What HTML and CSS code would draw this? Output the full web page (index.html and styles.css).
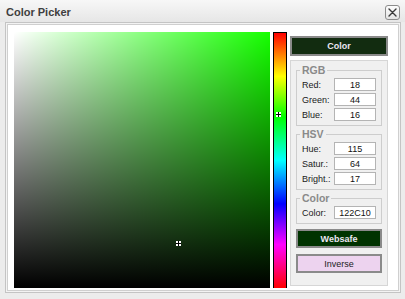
FILE: index.html
```html
<!DOCTYPE html>
<html lang="en">
<head>
  <meta charset="UTF-8" />
  <title>Color Picker</title>
  <link rel="stylesheet" href="styles.css">
</head>
<body>

  <div class="window">
    <!-- Title bar -->
    <div class="titlebar">
      <span class="title">Color Picker</span>
      <button class="close" title="Close">
        <svg width="9" height="9" viewBox="0 0 9 9">
          <path d="M1 1 L8 8 M8 1 L1 8" stroke="#3a3a3a" stroke-width="1.4" stroke-linecap="round" fill="none"/>
        </svg>
      </button>
    </div>

    <div class="frame">
      <div class="content">

        <!-- Saturation / brightness square -->
        <div class="sv">
          <span class="marker" style="left: 162px; top: 209px;">
            <svg width="5" height="5" viewBox="0 0 5 5" shape-rendering="crispEdges">
              <rect x="0" y="0" width="5" height="5" fill="#fff"/>
              <rect x="2" y="0" width="1" height="5" fill="#000"/>
              <rect x="0" y="2" width="5" height="1" fill="#000"/>
            </svg>
          </span>
        </div>

        <!-- Hue bar -->
        <div class="hue">
          <span class="marker" style="left: 2px; top: 79px;">
            <svg width="5" height="5" viewBox="0 0 5 5" shape-rendering="crispEdges">
              <rect x="0" y="0" width="5" height="5" fill="#fff"/>
              <rect x="2" y="0" width="1" height="5" fill="#000"/>
              <rect x="0" y="2" width="5" height="1" fill="#000"/>
            </svg>
          </span>
        </div>

        <!-- Values -->
        <div class="side">
          <button class="btn btn-color">Color</button>
          <div class="panel">
            <fieldset class="group">
              <legend>RGB</legend>
              <div class="row"><label>Red:</label><input class="field" value="18"></div>
              <div class="row"><label>Green:</label><input class="field" value="44"></div>
              <div class="row"><label>Blue:</label><input class="field" value="16"></div>
            </fieldset>
            <fieldset class="group">
              <legend>HSV</legend>
              <div class="row"><label>Hue:</label><input class="field" value="115"></div>
              <div class="row"><label>Satur.:</label><input class="field" value="64"></div>
              <div class="row"><label>Bright.:</label><input class="field" value="17"></div>
            </fieldset>
            <fieldset class="group">
              <legend>Color</legend>
              <div class="row"><label>Color:</label><input class="field" value="122C10"></div>
            </fieldset>
            <button class="btn btn-websafe">Websafe</button>
            <button class="btn btn-inverse">Inverse</button>
          </div>
        </div>

      </div>
    </div>
  </div>

</body>
</html>
```

FILE: styles.css
```css
body {
  margin: 0;
  padding: 0;
  background-color: #ececec;
  font-family: 'Liberation Sans', Arial, sans-serif;
  color: #1a1a1a;
}
.window {
  width: 405px;
  height: 299px;
  overflow: hidden;
  background-color: #ececec;
}

/* Title bar */
.titlebar {
  height: 22px;
  display: flex;
  align-items: center;
  justify-content: space-between;
  padding: 0 5px 0 6px;
  background: linear-gradient(to bottom, #f7f7f7, #e6e6e6);
}
.title {
  font-size: 11px;
  font-weight: bold;
  color: #3f3f3f;
  margin-top: 1px;
}
.close {
  width: 15px;
  height: 15px;
  padding: 0;
  margin-top: 3px;
  border: 1px solid #8c8c8c;
  border-radius: 3px;
  background: linear-gradient(to bottom, #fdfdfd, #e4e4e4);
  display: flex;
  align-items: center;
  justify-content: center;
}

/* Frame */
.frame {
  margin: 0 4px 0 5px;
  border: 1px solid #c4c4c4;
  padding: 1px;
  background-color: #f3f3f3;
}
.content {
  display: flex;
  gap: 3px;
  padding: 7px 10px 2px 6px;
  border: 1px solid #cfcfcf;
  background-color: #ffffff;
}

/* Picker areas */
.sv {
  position: relative;
  width: 256px;
  height: 256px;
  flex: none;
  background:
    linear-gradient(to top, #000, rgba(0, 0, 0, 0)),
    linear-gradient(to right, #fff, rgba(255, 255, 255, 0)),
    #15ff00;
}
.hue {
  position: relative;
  width: 12px;
  height: 255px;
  flex: none;
  border: 1px solid #000;
  border-bottom: none;
  background: linear-gradient(to bottom, #f00 0%, #ff0 17%, #0f0 33%, #0ff 50%, #00f 67%, #f0f 83%, #f00 100%);
}
.marker {
  position: absolute;
  width: 5px;
  height: 5px;
  line-height: 0;
}

/* Side column */
.side {
  width: 98px;
  flex: none;
  padding-top: 4px;
}
.btn {
  display: block;
  width: 100%;
  box-sizing: border-box;
  padding: 0;
  border: 2px solid #8a8a8a;
  font-family: 'Liberation Sans', Arial, sans-serif;
  font-size: 9px;
  cursor: pointer;
}
.btn-color {
  height: 20px;
  background-color: #122c10;
  color: #ece6f2;
  font-weight: bold;
}
.btn-websafe {
  height: 19px;
  margin-top: 5px;
  background-color: #003300;
  color: #ece6f2;
  font-weight: bold;
}
.btn-inverse {
  height: 19px;
  margin-top: 6px;
  background-color: #edd3ef;
  color: #222;
}
.panel {
  margin-top: 4px;
  padding: 3px 5px 12px 5px;
  border: 1px solid #d6d6d6;
  background-color: #f0f0f0;
}

/* Groups */
.group {
  margin: 2px 0 0 0;
  padding: 2px 5px 4px 5px;
  min-width: 0;
  border: 1px solid #cdcdcd;
}
.group:first-child {
  margin-top: 0;
}
.group legend {
  margin-left: -2px;
  padding: 0 2px;
  font-size: 10.5px;
  line-height: 12px;
  font-weight: bold;
  color: #8a8a8a;
}
.row {
  display: flex;
  align-items: center;
  justify-content: space-between;
  height: 13px;
  margin-top: 2px;
  font-size: 9px;
}
.row:first-of-type {
  margin-top: 0;
}
.field {
  width: 42px;
  height: 13px;
  box-sizing: border-box;
  padding: 0;
  border: 1px solid #b4b4b4;
  background-color: #fff;
  font-family: 'Liberation Sans', Arial, sans-serif;
  font-size: 9px;
  color: #111;
  text-align: center;
}
```
